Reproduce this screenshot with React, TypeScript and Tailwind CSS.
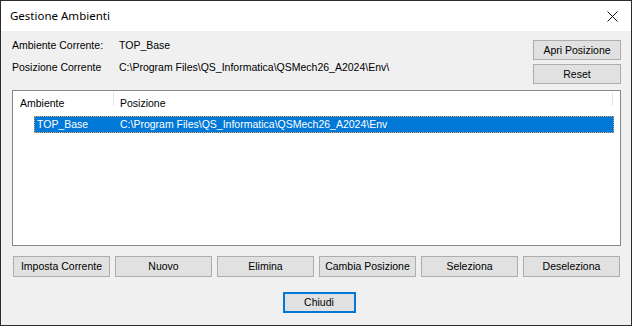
import { useState } from 'react'

const actions = ['Imposta Corrente', 'Nuovo', 'Elimina', 'Cambia Posizione', 'Seleziona', 'Deseleziona']

const rows = [{ name: 'TOP_Base', path: 'C:\\Program Files\\QS_Informatica\\QSMech26_A2024\\Env' }]

function WinButton({ label, className = '' }: { label: string; className?: string }) {
  return (
    <button
      className={`h-[20px] border border-[#adadad] bg-[#e1e1e1] text-[10.5px] leading-none text-black ${className}`}
    >
      {label}
    </button>
  )
}

export default function App() {
  const [selected, setSelected] = useState(0)

  return (
    <div
      className="flex h-[326px] w-[632px] flex-col border border-[#2b2b2b] bg-[#f0f0f0] text-[10.5px] text-black"
      style={{ fontFamily: '"Liberation Sans", Arial, sans-serif' }}
    >
      {/* title bar */}
      <div className="flex h-[30px] items-center justify-between bg-white pl-[9px] pr-[11px]">
        <span className="text-[11.5px]" style={{ fontFamily: '"Noto Sans", sans-serif' }}>
          Gestione Ambienti
        </span>
        <svg width="11" height="11" viewBox="0 0 11 11" className="mr-[2px]">
          <path d="M0.5 0.5 L10.5 10.5 M10.5 0.5 L0.5 10.5" stroke="#111" strokeWidth="1" />
        </svg>
      </div>

      <div className="flex flex-1 flex-col px-[11px] pt-[7px]">
        <div className="flex items-start justify-between">
          <div className="grid grid-cols-[107px_1fr] content-start gap-y-[8px] leading-[14px]">
            <span>Ambiente Corrente:</span>
            <span>TOP_Base</span>
            <span>Posizione Corrente</span>
            <span>C:\Program Files\QS_Informatica\QSMech26_A2024\Env\</span>
          </div>
          <div className="mr-[-1px] mt-[2px] flex w-[88px] flex-col gap-[4px]">
            <WinButton label="Apri Posizione" />
            <WinButton label="Reset" />
          </div>
        </div>

        {/* list */}
        <div className="mt-[6px] flex h-[156px] w-[609px] flex-col border border-[#828790] bg-white">
          <div className="flex h-[25px] items-center">
            <div className="relative h-full w-[101px] pl-[7px] leading-[25px]">
              Ambiente
              <span className="absolute right-0 top-[1px] h-[14px] w-px bg-[#e5e5e5]" />
            </div>
            <div className="relative h-full w-[499px] pl-[6px] leading-[25px]">
              Posizione
              <span className="absolute right-0 top-[1px] h-[14px] w-px bg-[#e5e5e5]" />
            </div>
          </div>
          {rows.map((r, i) => (
            <div
              key={r.name}
              onClick={() => setSelected(i)}
              className={`ml-[21px] flex h-[17px] w-[580px] items-center border border-dotted ${
                selected === i ? 'border-[#e8a060] bg-[#0078d7] text-white' : 'border-transparent'
              }`}
            >
              <span className="w-[81px] pl-[2px]">{r.name}</span>
              <span className="pl-[4px]">{r.path}</span>
            </div>
          ))}
        </div>

        <div className="ml-[1px] mt-[10px] grid w-[607px] grid-cols-6 gap-[5px]">
          {actions.map((a) => (
            <WinButton key={a} label={a} className="h-[21px]" />
          ))}
        </div>

        <div className="mt-[15px] flex justify-center pl-[6px]">
          <button className="h-[21px] w-[73px] border-2 border-[#0078d7] bg-[#e1e1e1] text-[10.5px] leading-none">
            Chiudi
          </button>
        </div>
      </div>
    </div>
  )
}
